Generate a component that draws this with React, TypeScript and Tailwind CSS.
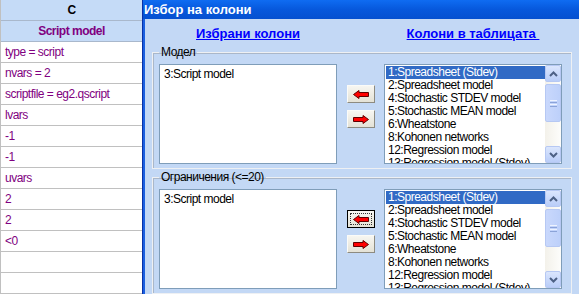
import React from 'react';

const sheetRows = [
  'type = script',
  'nvars = 2',
  'scriptfile = eg2.qscript',
  'lvars',
  '-1',
  '-1',
  'uvars',
  '2',
  '2',
  '<0',
  '',
  '',
];

const tableCols = [
  '1:Spreadsheet (Stdev)',
  '2:Spreadsheet model',
  '4:Stochastic STDEV model',
  '5:Stochastic MEAN model',
  '6:Wheatstone',
  '8:Kohonen networks',
  '12:Regression model',
  '13:Regression model (Stdev)',
];

function Arrow({ dir }: { dir: 'left' | 'right' }) {
  const pts =
    dir === 'left'
      ? '0.5,4.5 6,0.5 6,2.5 15.5,2.5 15.5,6.5 6,6.5 6,8.5'
      : '15.5,4.5 10,0.5 10,2.5 0.5,2.5 0.5,6.5 10,6.5 10,8.5';
  return (
    <svg width="16" height="9" viewBox="0 0 16 9">
      <polygon points={pts} fill="#ff0000" stroke="#600000" strokeWidth="1" strokeLinejoin="miter" />
    </svg>
  );
}

function ArrowButton({ dir, focused }: { dir: 'left' | 'right'; focused?: boolean }) {
  return (
    <div
      className={
        focused
          ? 'w-[28px] h-[18px] border border-black bg-gradient-to-b from-[#f7f6f1] to-[#e4e2d6] p-[2px] flex'
          : 'w-[28px] h-[18px] border border-[#fbfbf8] border-r-[#8d8b81] border-b-[#8d8b81] bg-gradient-to-b from-[#f7f6f1] to-[#e4e2d6] flex'
      }
    >
      <div
        className={
          focused
            ? 'flex-1 border border-dotted border-[#333] flex items-center justify-center'
            : 'flex-1 flex items-center justify-center'
        }
      >
        <Arrow dir={dir} />
      </div>
    </div>
  );
}

function ScrollBtn({ up }: { up?: boolean }) {
  return (
    <div className="h-[17px] rounded-[2px] border border-[#b6c8f3] bg-gradient-to-b from-[#dbe6fd] to-[#b9cdf8] flex items-center justify-center">
      <svg width="9" height="6" viewBox="0 0 9 6">
        <polyline
          points={up ? '1,5 4.5,1.5 8,5' : '1,1 4.5,4.5 8,1'}
          fill="none"
          stroke="#4d6185"
          strokeWidth="2"
        />
      </svg>
    </div>
  );
}

function ScrollBar() {
  return (
    <div className="w-[16px] flex flex-col bg-gradient-to-r from-[#f3f1ea] to-[#fdfdfb]">
      <ScrollBtn up />
      <div className="flex-1 flex flex-col pt-[2px]">
        <div className="h-[38px] rounded-[2px] border border-[#b6c8f3] bg-gradient-to-r from-[#c9d8fc] to-[#bdd0fa] flex flex-col items-center justify-center gap-[1px]">
          <div className="w-[7px] h-[1px] bg-[#eef3fe]" />
          <div className="w-[7px] h-[1px] bg-[#8ba3d8]" />
          <div className="w-[7px] h-[1px] bg-[#eef3fe]" />
          <div className="w-[7px] h-[1px] bg-[#8ba3d8]" />
        </div>
      </div>
      <ScrollBtn />
    </div>
  );
}

function SourceList() {
  return (
    <div className="w-[178px] h-[100px] border border-[#7f9db9] bg-white flex overflow-hidden">
      <div className="flex-1 pt-[1px] pl-[1px] overflow-hidden">
        {tableCols.map((c, i) => (
          <div
            key={c}
            className={
              i === 0
                ? 'h-[13px] leading-[13px] px-[2px] bg-[#316ac5] text-white whitespace-nowrap'
                : 'h-[13px] leading-[13px] px-[2px] text-black whitespace-nowrap'
            }
          >
            {c}
          </div>
        ))}
      </div>
      <ScrollBar />
    </div>
  );
}

function ChosenList() {
  return (
    <div className="w-[178px] h-[100px] border border-[#7f9db9] bg-white pt-[3px] pl-[4px] text-black leading-[13px]">
      3:Script model
    </div>
  );
}

function Group({ title, focused, className }: { title: string; focused?: boolean; className?: string }) {
  return (
    <fieldset
      className={`border border-[#eef0f3] shadow-[inset_1px_1px_0_#aab7c9] pl-[6px] pr-[9px] pt-[5px] pb-[4px] ${className ?? ''}`}
    >
      <legend className="px-[2px] leading-[14px] text-black">{title}</legend>
      <div className="flex">
        <ChosenList />
        <div className="w-[47px] flex flex-col items-center pt-[21px] gap-[7px]">
          <ArrowButton dir="left" focused={focused} />
          <ArrowButton dir="right" />
        </div>
        <SourceList />
      </div>
    </fieldset>
  );
}

export default function App() {
  return (
    <div className="w-[579px] h-[294px] overflow-hidden flex bg-white font-['Liberation_Sans',Arial,sans-serif] text-[12px] tracking-[-0.5px]">
      {/* spreadsheet column */}
      <div className="w-[142px] shrink-0 flex flex-col border-l border-[#c0c0c0]">
        <div className="h-[21px] shrink-0 bg-[#c5dbf7] border-b border-[#a9b8cc] flex items-center justify-center font-bold text-black">
          C
        </div>
        <div className="h-[21px] shrink-0 bg-[#c5dbf7] border-b border-[#a9b8cc] flex items-center justify-center font-bold text-[#800080]">
          Script model
        </div>
        {sheetRows.map((r, i) => (
          <div
            key={i}
            className="h-[21px] shrink-0 border-b border-[#c0c0c0] flex items-center pl-[4px] text-[#800080]"
          >
            {r}
          </div>
        ))}
      </div>

      {/* dialog */}
      <div className="flex-1 flex flex-col border-l border-[#0831a8]">
        <div className="h-[19px] shrink-0 bg-gradient-to-b from-[#0f6cf2] via-[#0758dc] to-[#0550d0] flex items-center pl-[1px] text-white font-bold text-[13px] tracking-[0px]">
          Избор на колони
        </div>
        <div className="flex-1 bg-[#c3d8f5] border-l-[2px] border-[#1a5fe0] pl-[7px] pr-[7px] pt-[7px]">
          <div className="flex pl-[7px] h-[15px] leading-[15px] font-bold text-[13px] tracking-[0px] text-[#0000ff] underline">
            <div className="w-[178px] text-center">Избрани колони</div>
            <div className="w-[47px]" />
            <div className="w-[178px] text-center whitespace-pre">Колони в таблицата </div>
          </div>
          <Group title="Модел" className="mt-[4px]" />
          <Group title="Ограничения (<=20)" focused className="mt-[1px]" />
        </div>
      </div>
    </div>
  );
}
